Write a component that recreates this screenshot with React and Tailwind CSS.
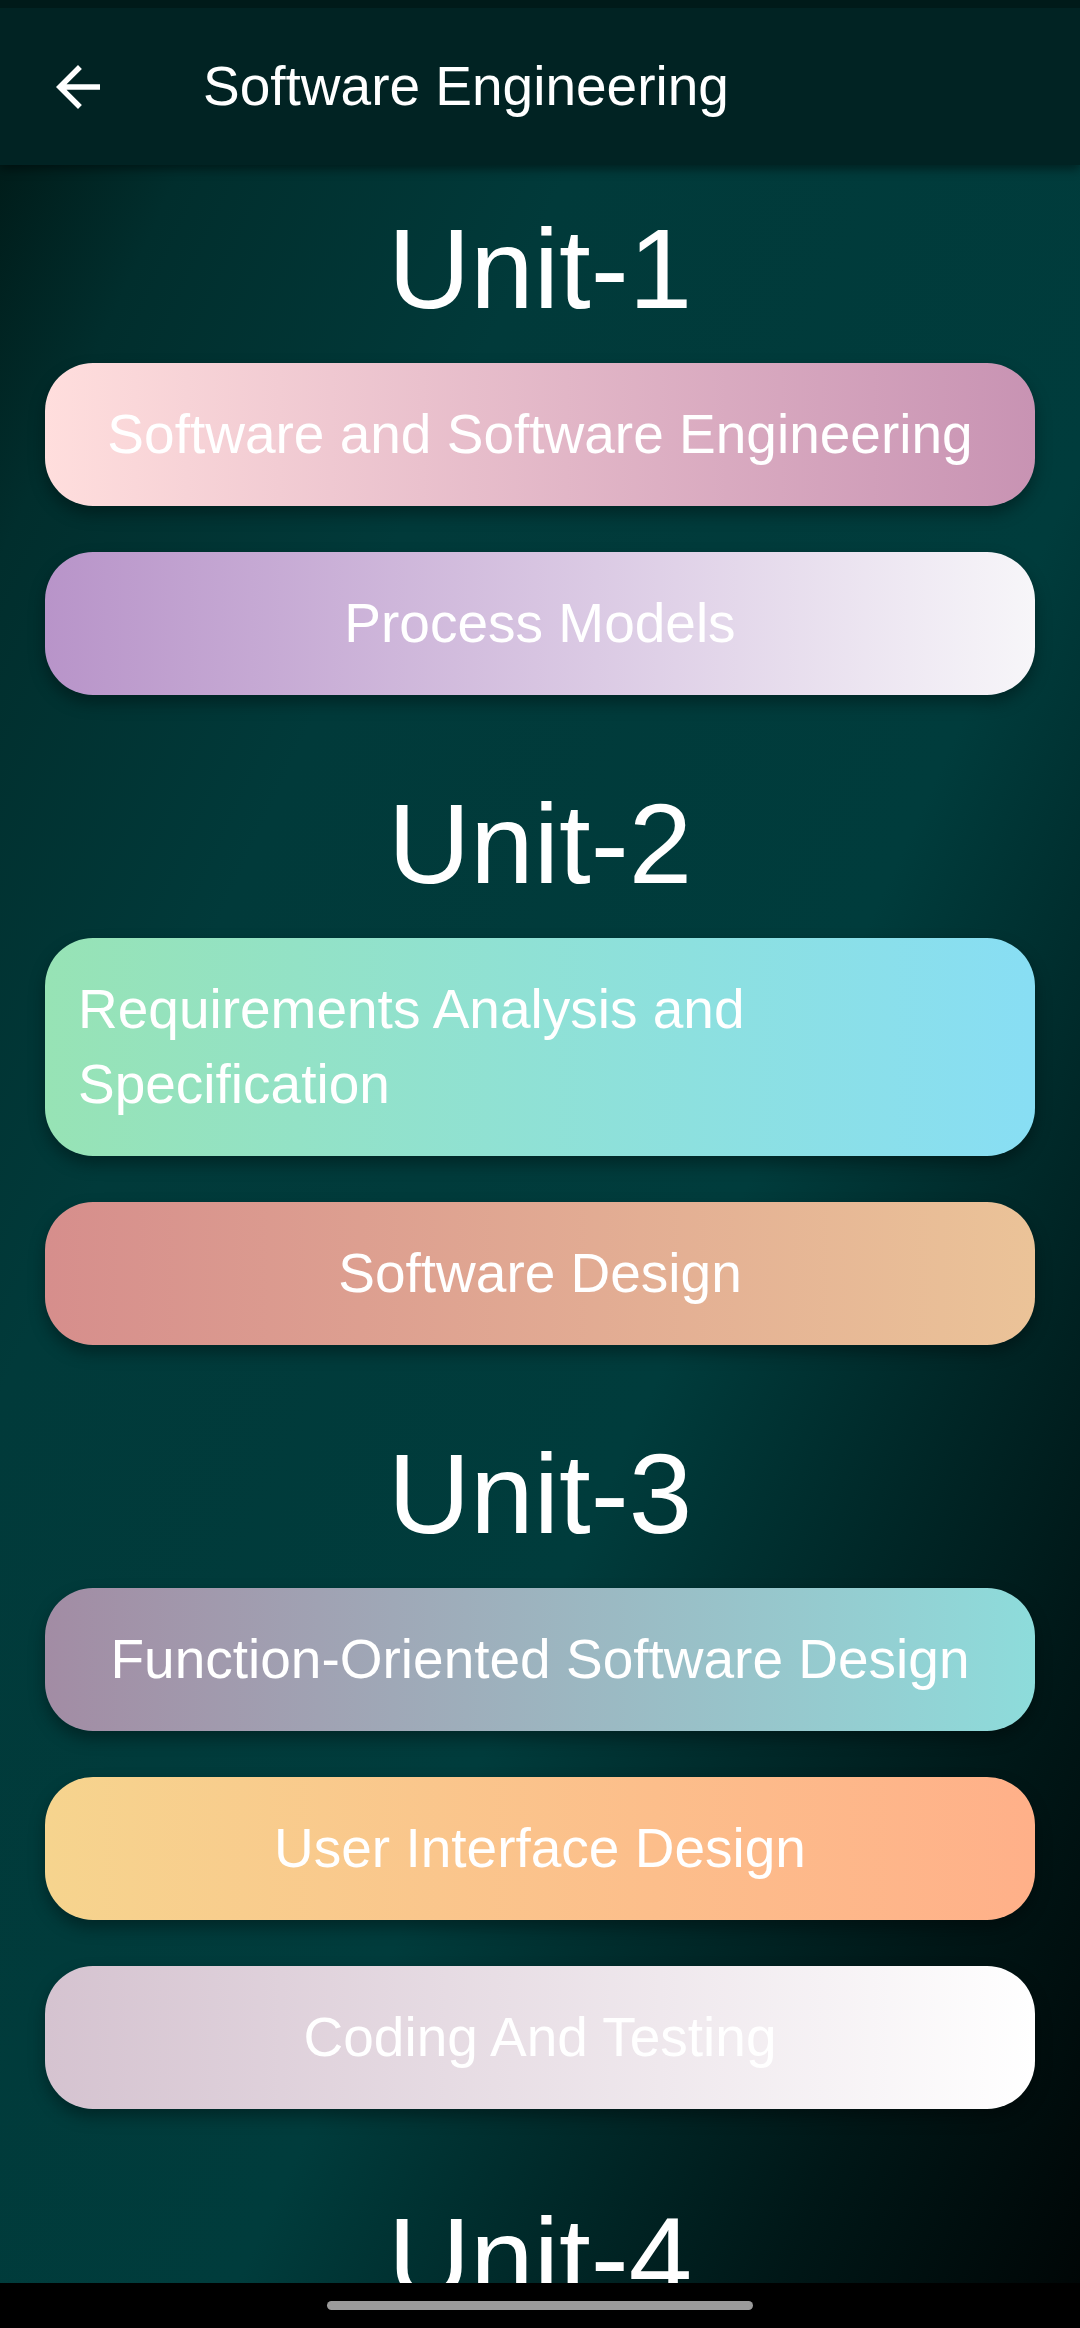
const units = [
  {
    title: 'Unit-1',
    topics: [
      { name: 'Software and Software Engineering', bg: 'from-[#ffdedd] to-[#c893b3]' },
      { name: 'Process Models', bg: 'from-[#b894c9] to-[#f7f6f9]' },
    ],
  },
  {
    title: 'Unit-2',
    topics: [
      { name: 'Requirements Analysis and Specification', bg: 'from-[#97e3b5] to-[#88def4]' },
      { name: 'Software Design', bg: 'from-[#d68e8c] to-[#ebc398]' },
    ],
  },
  {
    title: 'Unit-3',
    topics: [
      { name: 'Function-Oriented Software Design', bg: 'from-[#a28ca4] to-[#8ddcdb]' },
      { name: 'User Interface Design', bg: 'from-[#f6d48e] to-[#ffb089]' },
      { name: 'Coding And Testing', bg: 'from-[#d5c3d0] to-[#ffffff]' },
    ],
  },
  {
    title: 'Unit-4',
    topics: [
      { name: 'Software Reliability', bg: 'from-[#ffdedd] to-[#c893b3]' },
    ],
  },
];

function BackArrow() {
  return (
    <svg width="66" height="66" viewBox="0 0 24 24" fill="white">
      <path d="M20 11H7.83l5.59-5.59L12 4l-8 8 8 8 1.41-1.41L7.83 13H20v-2z" />
    </svg>
  );
}

function TopicCard({ name, bg }) {
  return (
    <div
      className={`flex justify-center items-center rounded-[48px] bg-linear-to-r ${bg} px-[33px] py-[34px] shadow-[0_8px_16px_rgba(0,0,0,0.35)]`}
    >
      <span className="text-white text-[55px] leading-[75px]">{name}</span>
    </div>
  );
}

export default function App() {
  return (
    <div className="flex flex-col h-[2328px] overflow-hidden bg-[linear-gradient(to_bottom_right,#001512_0%,#012e2d_12%,#013a3a_30%,#003c3c_60%,#001717_85%,#000505_100%)] font-['Liberation_Sans',Arial,sans-serif]">
      {/* App bar */}
      <header className="relative z-10 flex flex-col shrink-0 shadow-[0_4px_10px_rgba(0,0,0,0.45)]">
        <div className="h-[8px] bg-[#001a19]" />
        <div className="flex items-center h-[157px] bg-[#012323] pl-[45px]">
          <BackArrow />
          <h1 className="ml-[92px] text-white text-[55px] leading-none">Software Engineering</h1>
        </div>
      </header>

      {/* Units list */}
      <main className="flex-1 overflow-hidden px-[45px] pt-[47px]">
        <div className="flex flex-col gap-[92px]">
          {units.map((unit) => (
            <section key={unit.title} className="flex flex-col">
              <h2 className="text-center text-white text-[114px] leading-none mb-[37px]">{unit.title}</h2>
              <div className="flex flex-col gap-[46px]">
                {unit.topics.map((t) => (
                  <TopicCard key={t.name} name={t.name} bg={t.bg} />
                ))}
              </div>
            </section>
          ))}
        </div>
      </main>

      {/* Gesture nav bar */}
      <div className="flex justify-center items-center shrink-0 h-[45px] bg-black">
        <div className="w-[426px] h-[9px] rounded-full bg-[#9b9b9b]" />
      </div>
    </div>
  );
}
